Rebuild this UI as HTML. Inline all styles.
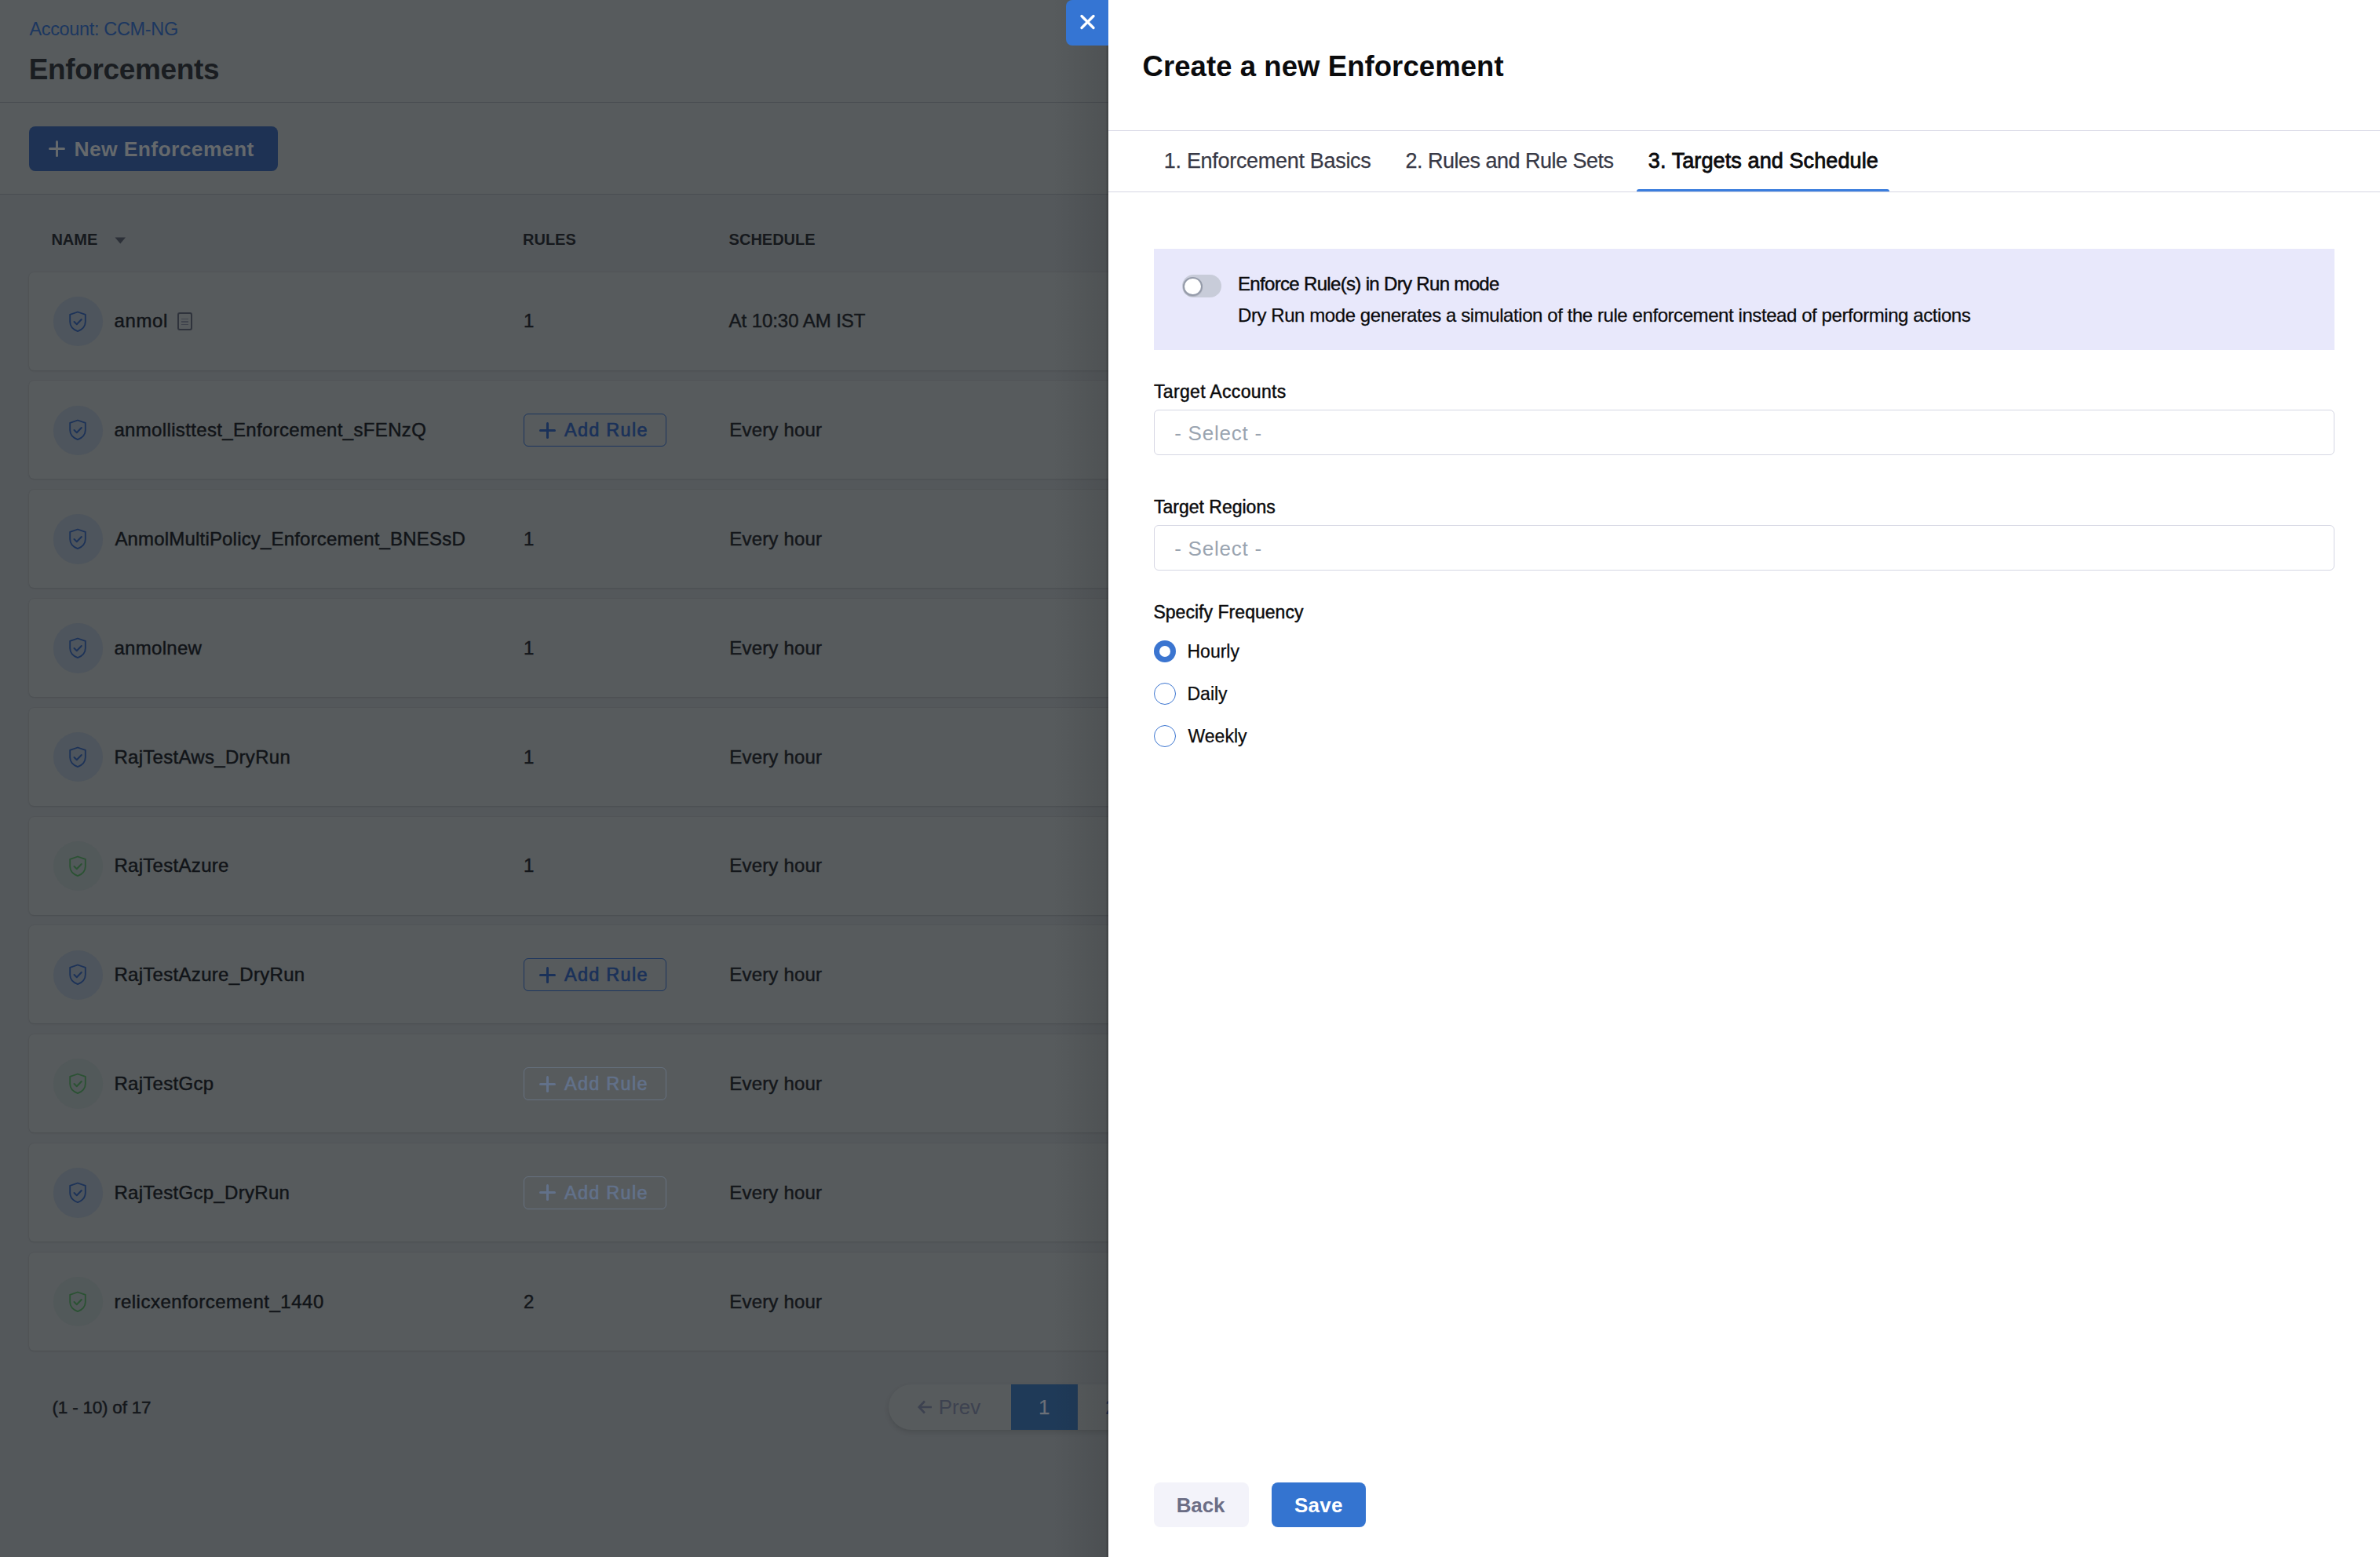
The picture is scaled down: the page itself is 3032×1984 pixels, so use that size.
<!DOCTYPE html>
<html><head><meta charset="utf-8"><style>
html,body{margin:0;padding:0;width:3032px;height:1984px;overflow:hidden;background:#fff;}
body{position:relative;font-family:"Liberation Sans",sans-serif;}
.t{position:absolute;line-height:1;white-space:nowrap;}
.r{position:absolute;}
</style></head><body>
<div class="r" style="left:0px;top:0px;width:1412px;height:1984px;background:#54585b;"></div>
<div class="r" style="left:0px;top:0px;width:1412px;height:130px;background:#575b5d;"></div>
<div class="r" style="left:0px;top:130px;width:1412px;height:1px;background:#4a4e52;"></div>
<div class="r" style="left:0px;top:131px;width:1412px;height:116px;background:#575b5d;"></div>
<div class="r" style="left:0px;top:247px;width:1412px;height:1px;background:#4a4e52;"></div>
<div class="t" id="acct" style="left:37.40px;top:25.71px;font-size:23.5px;font-weight:400;color:#1c3760;letter-spacing:-0.335px;">Account: CCM-NG</div>
<div class="t" id="enf" style="left:36.80px;top:70.48px;font-size:37px;font-weight:700;color:#1a1d21;letter-spacing:-0.360px;">Enforcements</div>
<div class="r" style="left:37px;top:161px;width:317px;height:57px;background:#1e3254;border-radius:8px;"></div>
<div class="r" style="left:62px;top:187.8px;width:21px;height:3.3999999999999773px;background:#65696c;border-radius:2px;"></div>
<div class="r" style="left:70.8px;top:179px;width:3.4000000000000057px;height:21.30000000000001px;background:#65696c;border-radius:2px;"></div>
<div class="t" id="newenf" style="left:94.50px;top:176.57px;font-size:26.5px;font-weight:700;color:#65696c;letter-spacing:0.357px;">New Enforcement</div>
<div class="t" id="hname" style="left:65.40px;top:294.67px;font-size:20px;font-weight:700;color:#16191d;">NAME</div>
<svg class="r" style="left:146px;top:302px" width="15" height="9"><path d="M0.5 0.5 L14 0.5 L7.25 8.5 Z" fill="#2c3038"/></svg>
<div class="t" id="hrules" style="left:666.00px;top:294.67px;font-size:20px;font-weight:700;color:#16191d;">RULES</div>
<div class="t" id="hsched" style="left:928.60px;top:294.67px;font-size:20px;font-weight:700;color:#16191d;">SCHEDULE</div>
<div class="r" style="left:36.5px;top:346.5px;width:1415.5px;height:125.0px;background:#575b5d;border-radius:6px;box-shadow:0 0 0 1px rgba(0,0,0,0.025), 0 1px 2px rgba(0,0,0,0.09);"></div>
<div class="r" style="left:67.5px;top:377.75px;width:63.5px;height:63.5px;background:#4e555d;border-radius:50%;"></div>
<svg class="r" style="left:87px;top:395.50px" width="24" height="28" viewBox="0 0 24 28"><path d="M12 1.5 L21.8 4.8 V14 C21.8 20 17.5 24 12 26.2 C6.5 24 2.2 20 2.2 14 V4.8 Z" fill="none" stroke="#1c3258" stroke-width="1.8" stroke-linejoin="round"/><path d="M7.5 14 L10.8 17.2 L16.8 11" fill="none" stroke="#1c3258" stroke-width="2.0" stroke-linecap="round" stroke-linejoin="round"/></svg>
<div class="t" id="name0" style="left:145.40px;top:397.38px;font-size:24px;font-weight:400;color:#111418;letter-spacing:0.666px;-webkit-text-stroke:0.45px currentColor;">anmol</div>
<div class="r" style="left:226px;top:398.0px;width:19px;height:22.5px;border:2px solid #2f333c;border-radius:3px;box-sizing:border-box;"></div>
<div class="r" style="left:231px;top:405.5px;width:9px;height:1.5px;background:#40444d;"></div>
<div class="r" style="left:231px;top:409.1px;width:9px;height:1.5px;background:#40444d;"></div>
<div class="r" style="left:231px;top:412.7px;width:9px;height:1.5px;background:#40444d;"></div>
<div class="t" id="rule0" style="left:667.00px;top:397.38px;font-size:24px;font-weight:400;color:#14171b;-webkit-text-stroke:0.45px currentColor;">1</div>
<div class="t" id="sched0" style="left:928.60px;top:397.38px;font-size:24px;font-weight:400;color:#14171b;letter-spacing:-0.072px;-webkit-text-stroke:0.45px currentColor;">At 10:30 AM IST</div>
<div class="r" style="left:36.5px;top:485.3px;width:1415.5px;height:124.99999999999994px;background:#575b5d;border-radius:6px;box-shadow:0 0 0 1px rgba(0,0,0,0.025), 0 1px 2px rgba(0,0,0,0.09);"></div>
<div class="r" style="left:67.5px;top:516.55px;width:63.5px;height:63.5px;background:#4e555d;border-radius:50%;"></div>
<svg class="r" style="left:87px;top:534.30px" width="24" height="28" viewBox="0 0 24 28"><path d="M12 1.5 L21.8 4.8 V14 C21.8 20 17.5 24 12 26.2 C6.5 24 2.2 20 2.2 14 V4.8 Z" fill="none" stroke="#1c3258" stroke-width="1.8" stroke-linejoin="round"/><path d="M7.5 14 L10.8 17.2 L16.8 11" fill="none" stroke="#1c3258" stroke-width="2.0" stroke-linecap="round" stroke-linejoin="round"/></svg>
<div class="t" id="name1" style="left:145.40px;top:536.18px;font-size:24px;font-weight:400;color:#111418;letter-spacing:0.344px;-webkit-text-stroke:0.45px currentColor;">anmollisttest_Enforcement_sFENzQ</div>
<div class="r" style="left:667px;top:527.3px;width:182px;height:42.0px;border:1.5px solid #1c355e;border-radius:6px;box-sizing:border-box;"></div>
<div class="r" style="left:687px;top:546.7px;width:21px;height:3.199999999999932px;background:#1a3159;border-radius:2px;"></div>
<div class="r" style="left:695.9px;top:537.8px;width:3.2000000000000455px;height:21.0px;background:#1a3159;border-radius:2px;"></div>
<div class="t" id="addr1" style="left:719.00px;top:537.01px;font-size:23.5px;font-weight:400;color:#1a3159;letter-spacing:1.257px;-webkit-text-stroke:0.65px currentColor;">Add Rule</div>
<div class="t" id="sched1" style="left:929.30px;top:536.18px;font-size:24px;font-weight:400;color:#14171b;letter-spacing:0.182px;-webkit-text-stroke:0.45px currentColor;">Every hour</div>
<div class="r" style="left:36.5px;top:624.1px;width:1415.5px;height:125.0px;background:#575b5d;border-radius:6px;box-shadow:0 0 0 1px rgba(0,0,0,0.025), 0 1px 2px rgba(0,0,0,0.09);"></div>
<div class="r" style="left:67.5px;top:655.35px;width:63.5px;height:63.5px;background:#4e555d;border-radius:50%;"></div>
<svg class="r" style="left:87px;top:673.10px" width="24" height="28" viewBox="0 0 24 28"><path d="M12 1.5 L21.8 4.8 V14 C21.8 20 17.5 24 12 26.2 C6.5 24 2.2 20 2.2 14 V4.8 Z" fill="none" stroke="#1c3258" stroke-width="1.8" stroke-linejoin="round"/><path d="M7.5 14 L10.8 17.2 L16.8 11" fill="none" stroke="#1c3258" stroke-width="2.0" stroke-linecap="round" stroke-linejoin="round"/></svg>
<div class="t" id="name2" style="left:146.40px;top:674.98px;font-size:24px;font-weight:400;color:#111418;letter-spacing:0.181px;-webkit-text-stroke:0.45px currentColor;">AnmolMultiPolicy_Enforcement_BNESsD</div>
<div class="t" id="rule2" style="left:667.00px;top:674.98px;font-size:24px;font-weight:400;color:#14171b;-webkit-text-stroke:0.45px currentColor;">1</div>
<div class="t" id="sched2" style="left:929.30px;top:674.98px;font-size:24px;font-weight:400;color:#14171b;letter-spacing:0.182px;-webkit-text-stroke:0.45px currentColor;">Every hour</div>
<div class="r" style="left:36.5px;top:762.9px;width:1415.5px;height:125.0px;background:#575b5d;border-radius:6px;box-shadow:0 0 0 1px rgba(0,0,0,0.025), 0 1px 2px rgba(0,0,0,0.09);"></div>
<div class="r" style="left:67.5px;top:794.15px;width:63.5px;height:63.5px;background:#4e555d;border-radius:50%;"></div>
<svg class="r" style="left:87px;top:811.90px" width="24" height="28" viewBox="0 0 24 28"><path d="M12 1.5 L21.8 4.8 V14 C21.8 20 17.5 24 12 26.2 C6.5 24 2.2 20 2.2 14 V4.8 Z" fill="none" stroke="#1c3258" stroke-width="1.8" stroke-linejoin="round"/><path d="M7.5 14 L10.8 17.2 L16.8 11" fill="none" stroke="#1c3258" stroke-width="2.0" stroke-linecap="round" stroke-linejoin="round"/></svg>
<div class="t" id="name3" style="left:145.40px;top:813.78px;font-size:24px;font-weight:400;color:#111418;-webkit-text-stroke:0.45px currentColor;letter-spacing:0.3px;">anmolnew</div>
<div class="t" id="rule3" style="left:667.00px;top:813.78px;font-size:24px;font-weight:400;color:#14171b;-webkit-text-stroke:0.45px currentColor;">1</div>
<div class="t" id="sched3" style="left:929.30px;top:813.78px;font-size:24px;font-weight:400;color:#14171b;letter-spacing:0.182px;-webkit-text-stroke:0.45px currentColor;">Every hour</div>
<div class="r" style="left:36.5px;top:901.7px;width:1415.5px;height:125.0px;background:#575b5d;border-radius:6px;box-shadow:0 0 0 1px rgba(0,0,0,0.025), 0 1px 2px rgba(0,0,0,0.09);"></div>
<div class="r" style="left:67.5px;top:932.95px;width:63.5px;height:63.5px;background:#4e555d;border-radius:50%;"></div>
<svg class="r" style="left:87px;top:950.70px" width="24" height="28" viewBox="0 0 24 28"><path d="M12 1.5 L21.8 4.8 V14 C21.8 20 17.5 24 12 26.2 C6.5 24 2.2 20 2.2 14 V4.8 Z" fill="none" stroke="#1c3258" stroke-width="1.8" stroke-linejoin="round"/><path d="M7.5 14 L10.8 17.2 L16.8 11" fill="none" stroke="#1c3258" stroke-width="2.0" stroke-linecap="round" stroke-linejoin="round"/></svg>
<div class="t" id="name4" style="left:145.40px;top:952.58px;font-size:24px;font-weight:400;color:#111418;letter-spacing:0.295px;-webkit-text-stroke:0.45px currentColor;">RajTestAws_DryRun</div>
<div class="t" id="rule4" style="left:667.00px;top:952.58px;font-size:24px;font-weight:400;color:#14171b;-webkit-text-stroke:0.45px currentColor;">1</div>
<div class="t" id="sched4" style="left:929.30px;top:952.58px;font-size:24px;font-weight:400;color:#14171b;letter-spacing:0.182px;-webkit-text-stroke:0.45px currentColor;">Every hour</div>
<div class="r" style="left:36.5px;top:1040.5px;width:1415.5px;height:125.0px;background:#575b5d;border-radius:6px;box-shadow:0 0 0 1px rgba(0,0,0,0.025), 0 1px 2px rgba(0,0,0,0.09);"></div>
<div class="r" style="left:67.5px;top:1071.75px;width:63.5px;height:63.5px;background:#52595a;border-radius:50%;"></div>
<svg class="r" style="left:87px;top:1089.50px" width="24" height="28" viewBox="0 0 24 28"><path d="M12 1.5 L21.8 4.8 V14 C21.8 20 17.5 24 12 26.2 C6.5 24 2.2 20 2.2 14 V4.8 Z" fill="none" stroke="#2b5233" stroke-width="1.8" stroke-linejoin="round"/><path d="M7.5 14 L10.8 17.2 L16.8 11" fill="none" stroke="#2b5233" stroke-width="2.0" stroke-linecap="round" stroke-linejoin="round"/></svg>
<div class="t" id="name5" style="left:145.40px;top:1091.38px;font-size:24px;font-weight:400;color:#111418;-webkit-text-stroke:0.45px currentColor;letter-spacing:0.3px;">RajTestAzure</div>
<div class="t" id="rule5" style="left:667.00px;top:1091.38px;font-size:24px;font-weight:400;color:#14171b;-webkit-text-stroke:0.45px currentColor;">1</div>
<div class="t" id="sched5" style="left:929.30px;top:1091.38px;font-size:24px;font-weight:400;color:#14171b;letter-spacing:0.182px;-webkit-text-stroke:0.45px currentColor;">Every hour</div>
<div class="r" style="left:36.5px;top:1179.3px;width:1415.5px;height:125.0px;background:#575b5d;border-radius:6px;box-shadow:0 0 0 1px rgba(0,0,0,0.025), 0 1px 2px rgba(0,0,0,0.09);"></div>
<div class="r" style="left:67.5px;top:1210.55px;width:63.5px;height:63.5px;background:#4e555d;border-radius:50%;"></div>
<svg class="r" style="left:87px;top:1228.30px" width="24" height="28" viewBox="0 0 24 28"><path d="M12 1.5 L21.8 4.8 V14 C21.8 20 17.5 24 12 26.2 C6.5 24 2.2 20 2.2 14 V4.8 Z" fill="none" stroke="#1c3258" stroke-width="1.8" stroke-linejoin="round"/><path d="M7.5 14 L10.8 17.2 L16.8 11" fill="none" stroke="#1c3258" stroke-width="2.0" stroke-linecap="round" stroke-linejoin="round"/></svg>
<div class="t" id="name6" style="left:145.40px;top:1230.18px;font-size:24px;font-weight:400;color:#111418;-webkit-text-stroke:0.45px currentColor;letter-spacing:0.3px;">RajTestAzure_DryRun</div>
<div class="r" style="left:667px;top:1221.3px;width:182px;height:42.0px;border:1.5px solid #1c355e;border-radius:6px;box-sizing:border-box;"></div>
<div class="r" style="left:687px;top:1240.7px;width:21px;height:3.2000000000000455px;background:#1a3159;border-radius:2px;"></div>
<div class="r" style="left:695.9px;top:1231.8px;width:3.2000000000000455px;height:21.0px;background:#1a3159;border-radius:2px;"></div>
<div class="t" id="addr6" style="left:719.00px;top:1231.01px;font-size:23.5px;font-weight:400;color:#1a3159;letter-spacing:1.257px;-webkit-text-stroke:0.65px currentColor;">Add Rule</div>
<div class="t" id="sched6" style="left:929.30px;top:1230.18px;font-size:24px;font-weight:400;color:#14171b;letter-spacing:0.182px;-webkit-text-stroke:0.45px currentColor;">Every hour</div>
<div class="r" style="left:36.5px;top:1318.1px;width:1415.5px;height:125.0px;background:#575b5d;border-radius:6px;box-shadow:0 0 0 1px rgba(0,0,0,0.025), 0 1px 2px rgba(0,0,0,0.09);"></div>
<div class="r" style="left:67.5px;top:1349.35px;width:63.5px;height:63.5px;background:#52595a;border-radius:50%;"></div>
<svg class="r" style="left:87px;top:1367.10px" width="24" height="28" viewBox="0 0 24 28"><path d="M12 1.5 L21.8 4.8 V14 C21.8 20 17.5 24 12 26.2 C6.5 24 2.2 20 2.2 14 V4.8 Z" fill="none" stroke="#2b5233" stroke-width="1.8" stroke-linejoin="round"/><path d="M7.5 14 L10.8 17.2 L16.8 11" fill="none" stroke="#2b5233" stroke-width="2.0" stroke-linecap="round" stroke-linejoin="round"/></svg>
<div class="t" id="name7" style="left:145.40px;top:1368.98px;font-size:24px;font-weight:400;color:#111418;-webkit-text-stroke:0.45px currentColor;letter-spacing:0.3px;">RajTestGcp</div>
<div class="r" style="left:667px;top:1360.1px;width:182px;height:42.0px;border:1.5px solid #667180;border-radius:6px;box-sizing:border-box;"></div>
<div class="r" style="left:687px;top:1379.5px;width:21px;height:3.2000000000000455px;background:#62718a;border-radius:2px;"></div>
<div class="r" style="left:695.9px;top:1370.6px;width:3.2000000000000455px;height:21.0px;background:#62718a;border-radius:2px;"></div>
<div class="t" id="addr7" style="left:719.00px;top:1369.81px;font-size:23.5px;font-weight:400;color:#62718a;letter-spacing:1.257px;-webkit-text-stroke:0.65px currentColor;">Add Rule</div>
<div class="t" id="sched7" style="left:929.30px;top:1368.98px;font-size:24px;font-weight:400;color:#14171b;letter-spacing:0.182px;-webkit-text-stroke:0.45px currentColor;">Every hour</div>
<div class="r" style="left:36.5px;top:1456.9px;width:1415.5px;height:125.0px;background:#575b5d;border-radius:6px;box-shadow:0 0 0 1px rgba(0,0,0,0.025), 0 1px 2px rgba(0,0,0,0.09);"></div>
<div class="r" style="left:67.5px;top:1488.15px;width:63.5px;height:63.5px;background:#4e555d;border-radius:50%;"></div>
<svg class="r" style="left:87px;top:1505.90px" width="24" height="28" viewBox="0 0 24 28"><path d="M12 1.5 L21.8 4.8 V14 C21.8 20 17.5 24 12 26.2 C6.5 24 2.2 20 2.2 14 V4.8 Z" fill="none" stroke="#1c3258" stroke-width="1.8" stroke-linejoin="round"/><path d="M7.5 14 L10.8 17.2 L16.8 11" fill="none" stroke="#1c3258" stroke-width="2.0" stroke-linecap="round" stroke-linejoin="round"/></svg>
<div class="t" id="name8" style="left:145.40px;top:1507.78px;font-size:24px;font-weight:400;color:#111418;-webkit-text-stroke:0.45px currentColor;letter-spacing:0.3px;">RajTestGcp_DryRun</div>
<div class="r" style="left:667px;top:1498.9px;width:182px;height:42.0px;border:1.5px solid #667180;border-radius:6px;box-sizing:border-box;"></div>
<div class="r" style="left:687px;top:1518.3px;width:21px;height:3.2000000000000455px;background:#62718a;border-radius:2px;"></div>
<div class="r" style="left:695.9px;top:1509.4px;width:3.2000000000000455px;height:21.0px;background:#62718a;border-radius:2px;"></div>
<div class="t" id="addr8" style="left:719.00px;top:1508.61px;font-size:23.5px;font-weight:400;color:#62718a;letter-spacing:1.257px;-webkit-text-stroke:0.65px currentColor;">Add Rule</div>
<div class="t" id="sched8" style="left:929.30px;top:1507.78px;font-size:24px;font-weight:400;color:#14171b;letter-spacing:0.182px;-webkit-text-stroke:0.45px currentColor;">Every hour</div>
<div class="r" style="left:36.5px;top:1595.7px;width:1415.5px;height:125.0px;background:#575b5d;border-radius:6px;box-shadow:0 0 0 1px rgba(0,0,0,0.025), 0 1px 2px rgba(0,0,0,0.09);"></div>
<div class="r" style="left:67.5px;top:1626.95px;width:63.5px;height:63.5px;background:#52595a;border-radius:50%;"></div>
<svg class="r" style="left:87px;top:1644.70px" width="24" height="28" viewBox="0 0 24 28"><path d="M12 1.5 L21.8 4.8 V14 C21.8 20 17.5 24 12 26.2 C6.5 24 2.2 20 2.2 14 V4.8 Z" fill="none" stroke="#2b5233" stroke-width="1.8" stroke-linejoin="round"/><path d="M7.5 14 L10.8 17.2 L16.8 11" fill="none" stroke="#2b5233" stroke-width="2.0" stroke-linecap="round" stroke-linejoin="round"/></svg>
<div class="t" id="name9" style="left:145.40px;top:1646.58px;font-size:24px;font-weight:400;color:#111418;letter-spacing:0.509px;-webkit-text-stroke:0.45px currentColor;">relicxenforcement_1440</div>
<div class="t" id="rule9" style="left:667.00px;top:1646.58px;font-size:24px;font-weight:400;color:#14171b;-webkit-text-stroke:0.45px currentColor;">2</div>
<div class="t" id="sched9" style="left:929.30px;top:1646.58px;font-size:24px;font-weight:400;color:#14171b;letter-spacing:0.182px;-webkit-text-stroke:0.45px currentColor;">Every hour</div>
<div class="t" id="pgcount" style="left:66.60px;top:1782.85px;font-size:22.5px;font-weight:400;color:#14171b;letter-spacing:-0.223px;-webkit-text-stroke:0.45px currentColor;">(1 - 10) of 17</div>
<div class="r" style="left:1131.6px;top:1763.7px;width:368.4000000000001px;height:58.09999999999991px;background:#575b5d;border-radius:29px;box-shadow:0 3px 6px rgba(0,0,0,0.12);"></div>
<div class="t" id="prev" style="left:1195.70px;top:1780.19px;font-size:26px;font-weight:400;color:#3d4250;">Prev</div>
<svg class="r" style="left:1168px;top:1782px" width="22" height="22" viewBox="0 0 22 22"><path d="M19 11 H3 M10 3.5 L2.8 11 L10 18.5" fill="none" stroke="#3d4250" stroke-width="2.6"/></svg>
<div class="r" style="left:1288px;top:1763.7px;width:85px;height:58.09999999999991px;background:#1f3a58;"></div>
<div class="t" id="pg1" style="left:1323.00px;top:1780.19px;font-size:26px;font-weight:400;color:#6b7078;-webkit-text-stroke:0.25px currentColor;">1</div>
<div class="t" id="pg2" style="left:1408.00px;top:1780.19px;font-size:26px;font-weight:400;color:#1d3050;">2</div>
<div class="r" style="left:1340px;top:0px;width:72px;height:1984px;background:linear-gradient(to right, rgba(0,0,0,0), rgba(0,0,0,0.10));"></div>
<div class="r" style="left:1409px;top:0px;width:3px;height:1984px;background:linear-gradient(to right, rgba(0,0,0,0.03), rgba(0,0,0,0.22));"></div>
<div class="r" style="left:1412px;top:0px;width:1620px;height:1984px;background:#ffffff;"></div>
<div class="r" style="left:1358px;top:0px;width:54px;height:58px;background:#3575d3;border-radius:8px 0 0 8px;"></div>
<svg class="r" style="left:1374px;top:17px" width="23" height="23" viewBox="0 0 23 23"><path d="M4 3.5 L19 18.5 M19 3.5 L4 18.5" stroke="#fff" stroke-width="3.4" stroke-linecap="round"/></svg>
<div class="t" id="title" style="left:1455.50px;top:66.70px;font-size:36.5px;font-weight:700;color:#0b0b0d;letter-spacing:0.071px;">Create a new Enforcement</div>
<div class="r" style="left:1412px;top:166px;width:1620px;height:1px;background:#d6d7e4;"></div>
<div class="t" id="tab1" style="left:1482.80px;top:192.14px;font-size:27px;font-weight:400;color:#383946;letter-spacing:-0.306px;-webkit-text-stroke:0.25px currentColor;">1. Enforcement Basics</div>
<div class="t" id="tab2" style="left:1790.60px;top:192.14px;font-size:27px;font-weight:400;color:#383946;letter-spacing:-0.517px;-webkit-text-stroke:0.25px currentColor;">2. Rules and Rule Sets</div>
<div class="t" id="tab3" style="left:2099.80px;top:192.14px;font-size:27px;font-weight:400;color:#0b0b0d;letter-spacing:0.105px;-webkit-text-stroke:0.8px currentColor;">3. Targets and Schedule</div>
<div class="r" style="left:1412px;top:244px;width:1620px;height:1px;background:#d6d7e4;"></div>
<div class="r" style="left:2085px;top:240.5px;width:322px;height:3.5px;background:#3b7ddd;border-radius:3px 3px 0 0;"></div>
<div class="r" style="left:1470px;top:317px;width:1504px;height:129px;background:#e8e8fb;"></div>
<div class="r" style="left:1506px;top:350px;width:50px;height:29px;background:#c8ccd9;border-radius:15px;"></div>
<div class="r" style="left:1507px;top:352.5px;width:25px;height:24.5px;background:#fff;border-radius:50%;border:2px solid #959baa;box-sizing:border-box;box-shadow:0 1px 1px rgba(0,0,0,0.15);"></div>
<div class="t" id="drytitle" style="left:1577.00px;top:350.48px;font-size:24px;font-weight:400;color:#0b0b0d;letter-spacing:-0.670px;-webkit-text-stroke:0.45px currentColor;">Enforce Rule(s) in Dry Run mode</div>
<div class="t" id="drydesc" style="left:1577.00px;top:389.78px;font-size:24px;font-weight:400;color:#0b0b0d;letter-spacing:-0.425px;-webkit-text-stroke:0.25px currentColor;">Dry Run mode generates a simulation of the rule enforcement instead of performing actions</div>
<div class="t" id="lblacc" style="left:1470.00px;top:488.13px;font-size:23px;font-weight:400;color:#0b0b0d;letter-spacing:0.327px;-webkit-text-stroke:0.45px currentColor;">Target Accounts</div>
<div class="r" style="left:1470px;top:522px;width:1504px;height:58px;border:1px solid #d5d6e3;border-radius:6px;box-sizing:border-box;background:#fff;"></div>
<div class="t" id="sel1" style="left:1496.20px;top:538.79px;font-size:26px;font-weight:400;color:#9aa4b0;letter-spacing:0.770px;">- Select -</div>
<div class="t" id="lblreg" style="left:1470.00px;top:634.93px;font-size:23px;font-weight:400;color:#0b0b0d;-webkit-text-stroke:0.45px currentColor;">Target Regions</div>
<div class="r" style="left:1470px;top:669px;width:1504px;height:58px;border:1px solid #d5d6e3;border-radius:6px;box-sizing:border-box;background:#fff;"></div>
<div class="t" id="sel2" style="left:1496.20px;top:686.09px;font-size:26px;font-weight:400;color:#9aa4b0;letter-spacing:0.770px;">- Select -</div>
<div class="t" id="lblfreq" style="left:1469.40px;top:768.53px;font-size:23px;font-weight:400;color:#0b0b0d;letter-spacing:0.039px;-webkit-text-stroke:0.45px currentColor;">Specify Frequency</div>
<div class="r" style="left:1470px;top:816px;width:28px;height:28px;background:#3b75d0;border-radius:50%;"></div>
<div class="r" style="left:1477px;top:823px;width:14px;height:14px;background:#fff;border-radius:50%;"></div>
<div class="t" id="rad0" style="left:1512.50px;top:819.13px;font-size:23px;font-weight:400;color:#0b0b0d;-webkit-text-stroke:0.25px currentColor;">Hourly</div>
<div class="r" style="left:1470px;top:870px;width:28px;height:28px;border:1.6px solid #3b75d0;border-radius:50%;box-sizing:border-box;background:#fff;"></div>
<div class="t" id="rad1" style="left:1512.50px;top:872.83px;font-size:23px;font-weight:400;color:#0b0b0d;-webkit-text-stroke:0.25px currentColor;">Daily</div>
<div class="r" style="left:1470px;top:924px;width:28px;height:28px;border:1.6px solid #3b75d0;border-radius:50%;box-sizing:border-box;background:#fff;"></div>
<div class="t" id="rad2" style="left:1513.50px;top:927.13px;font-size:23px;font-weight:400;color:#0b0b0d;-webkit-text-stroke:0.25px currentColor;">Weekly</div>
<div class="r" style="left:1470px;top:1889px;width:121px;height:57px;background:#f3f3fa;border-radius:8px;"></div>
<div class="t" id="back" style="left:1498.70px;top:1904.59px;font-size:26px;font-weight:700;color:#6b6d85;letter-spacing:-0.099px;">Back</div>
<div class="r" style="left:1620px;top:1889px;width:120px;height:57px;background:#3474d0;border-radius:8px;"></div>
<div class="t" id="save" style="left:1648.90px;top:1904.59px;font-size:26px;font-weight:700;color:#ffffff;letter-spacing:0.279px;">Save</div>
</body></html>
